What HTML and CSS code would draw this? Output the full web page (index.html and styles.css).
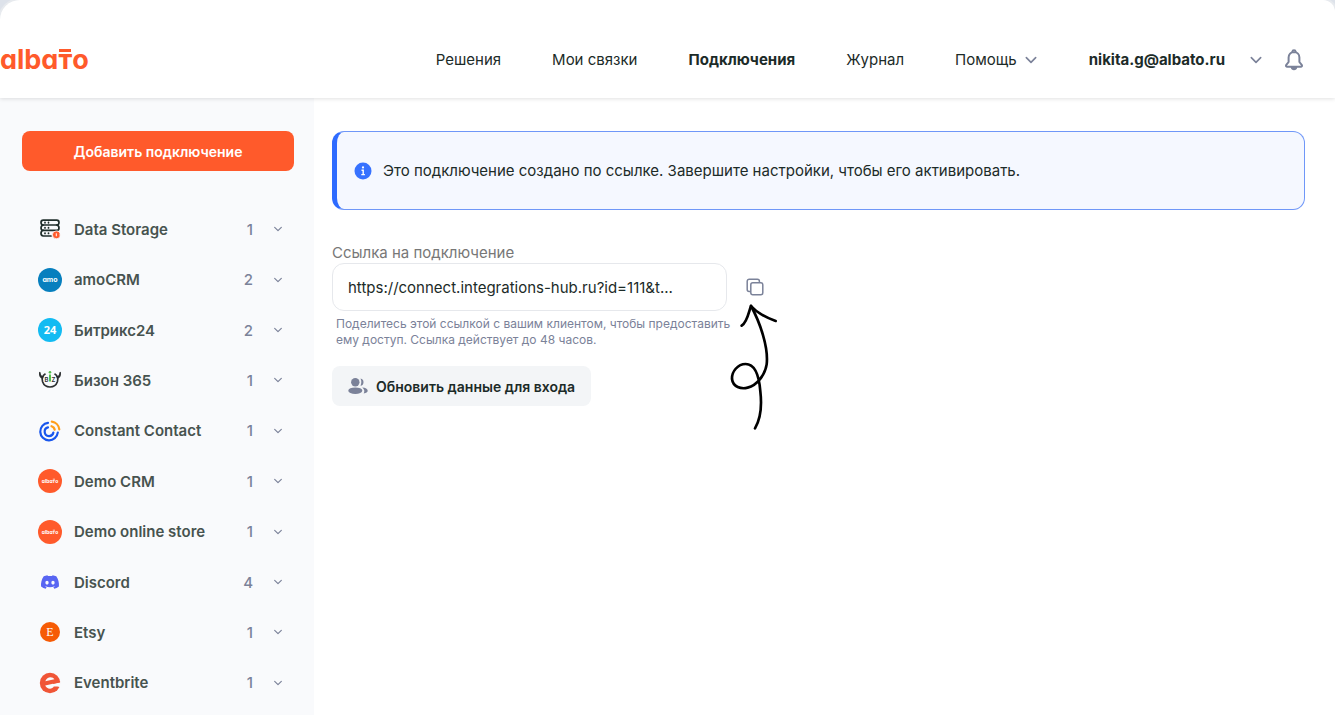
FILE: index.html
```html
<!DOCTYPE html>
<html lang="ru">
<head>
    <meta charset="UTF-8">
    <meta name="viewport" content="width=device-width, initial-scale=1.0">
    <title>Albato - Подключения</title>
    <link rel="stylesheet" href="styles.css">
</head>
<body>
    <!-- Shared icons -->
    <svg class="sprite" aria-hidden="true">
        <symbol id="chevron" viewBox="0 0 12 12">
            <path d="M2 4l4 4 4-4" fill="none" stroke="currentColor" stroke-width="1.4" stroke-linecap="round" stroke-linejoin="round"/>
        </symbol>
    </svg>

    <div class="app">
        <!-- Header -->
        <header class="header">
            <a href="#" class="logo">alba<span class="logo-t">т</span>o</a>
            <nav class="nav">
                <a href="#">Решения</a>
                <a href="#">Мои связки</a>
                <a href="#" class="active">Подключения</a>
                <a href="#">Журнал</a>
                <a href="#" class="nav-help">Помощь <svg class="chevron-lg"><use href="#chevron"/></svg></a>
            </nav>
            <button class="account">nikita.g@albato.ru <svg class="chevron-lg"><use href="#chevron"/></svg></button>
            <button class="bell" aria-label="Уведомления">
                <svg width="20" height="22" viewBox="0 0 20 22" fill="none" stroke="#7b8299" stroke-width="2" stroke-linejoin="round">
                    <path d="M8.5 3.2V2.6c0-.8.7-1.4 1.5-1.4s1.5.6 1.5 1.4v.6"/>
                    <path d="M10 3C6.700 3 4.600 5.500 4.600 8.500v4.500L2.100 16.200c-.4.6 0 1.500.7 1.500h14.400c.7 0 1.100-.9.7-1.500L15.400 13V8.500C15.400 5.500 13.300 3 10 3z"/>
                    <path d="M7.700 18.200c.3 1.300 1.200 2 2.300 2s2-.7 2.300-2z" fill="#7b8299"/>
                </svg>
            </button>
        </header>

        <div class="content">
            <!-- Sidebar -->
            <aside class="sidebar">
                <button class="add-button">Добавить подключение</button>
                <ul class="services">
                    <li>
                        <button class="service">
                            <svg class="service-icon" viewBox="0 0 24 24" fill="none" stroke="#1f2e2b" stroke-width="1.7" stroke-linecap="round">
                                <path d="M5.300 3.200h13.400q2.300 0 2.300 2.400t-2.300 2.400H5.300Q3 8 3 5.600t2.300-2.400z"/>
                                <path d="M5.300 8Q3 8.600 3 10.900t2.300 2.400h13.400q2.300 0 2.300-2.400T18.700 8"/>
                                <path d="M5.300 13.300Q3 13.900 3 16.300t2.300 2.700h7.700"/>
                                <path d="M7 5.400v.4M10.500 5.400v.4M7 10.600v.4M10.500 10.600v.4M7 16v.4M10.500 16v.4"/>
                                <circle cx="18.300" cy="17.800" r="3.900" fill="#ff5a2b" stroke="#f9fafc" stroke-width=".8"/>
                                <path d="M18.300 16.700v2.200" stroke="#fff" stroke-width="1"/>
                            </svg>
                            <span class="service-name">Data Storage</span>
                            <span class="service-count">1</span>
                            <svg class="chevron"><use href="#chevron"/></svg>
                        </button>
                    </li>
                    <li>
                        <button class="service">
                            <svg class="service-icon" viewBox="0 0 24 24">
                                <circle cx="12" cy="12" r="12" fill="#077fbe"/>
                                <text x="12" y="14" class="round-text round-text-amo">amo</text>
                            </svg>
                            <span class="service-name">amoCRM</span>
                            <span class="service-count">2</span>
                            <svg class="chevron"><use href="#chevron"/></svg>
                        </button>
                    </li>
                    <li>
                        <button class="service">
                            <svg class="service-icon" viewBox="0 0 24 24">
                                <circle cx="12" cy="12" r="12" fill="#13bbf2"/>
                                <text x="12" y="16" class="round-text round-text-24">24</text>
                            </svg>
                            <span class="service-name">Битрикс24</span>
                            <span class="service-count">2</span>
                            <svg class="chevron"><use href="#chevron"/></svg>
                        </button>
                    </li>
                    <li>
                        <button class="service">
                            <svg class="service-icon" viewBox="0 0 24 24">
                                <path d="M7.500 5.800C4.500 7.600 3.600 10.600 4.600 13.800c1.200 3.400 4.200 5.200 7.400 5.200s6.200-1.800 7.400-5.200c1-3.200.1-6.200-2.900-8" fill="none" stroke="#2c2f30" stroke-width="1.700"/>
                                <path d="M1.200 3.800c-.7 3.600.5 6.400 3.600 7l1-2.500C3.600 8.200 2.500 7.100 2.700 4.600zM22.800 3.800c.7 3.600-.5 6.400-3.600 7l-1-2.500c2.200-.1 3.300-1.200 3.100-3.700z" fill="#2c2f30"/>
                                <text x="8.500" y="14" class="biz-text">B</text>
                                <text x="15.500" y="14" class="biz-text">Z</text>
                                <path d="M12 6.500v7" stroke="#55c04d" stroke-width="2"/>
                                <circle cx="12" cy="4.200" r="1.300" fill="#55c04d"/>
                            </svg>
                            <span class="service-name">Бизон 365</span>
                            <span class="service-count">1</span>
                            <svg class="chevron"><use href="#chevron"/></svg>
                        </button>
                    </li>
                    <li>
                        <button class="service">
                            <svg class="service-icon" viewBox="0 0 24 24" fill="none" stroke="#1856ed" stroke-width="2.200" stroke-linecap="round">
                                <path d="M10 3.800A8.800 8.800 0 1 0 19.800 13.500"/>
                                <path d="M10 8.400A4.400 4.400 0 1 0 15.400 13.500"/>
                                <path d="M13.800 2.600a8.800 8.800 0 0 1 7.500 7.700M13.500 7.200a4.500 4.500 0 0 1 3.200 3.500" stroke="#ff9e1a"/>
                            </svg>
                            <span class="service-name">Constant Contact</span>
                            <span class="service-count">1</span>
                            <svg class="chevron"><use href="#chevron"/></svg>
                        </button>
                    </li>
                    <li>
                        <button class="service">
                            <svg class="service-icon" viewBox="0 0 24 24">
                                <circle cx="12" cy="12" r="12" fill="#ff5a2b"/>
                                <text x="12" y="14" class="round-text round-text-albato">albaтo</text>
                                <path d="M14.800 10.200h2.200" stroke="#fff" stroke-width=".7"/>
                            </svg>
                            <span class="service-name">Demo CRM</span>
                            <span class="service-count">1</span>
                            <svg class="chevron"><use href="#chevron"/></svg>
                        </button>
                    </li>
                    <li>
                        <button class="service">
                            <svg class="service-icon" viewBox="0 0 24 24">
                                <circle cx="12" cy="12" r="12" fill="#ff5a2b"/>
                                <text x="12" y="14" class="round-text round-text-albato">albaтo</text>
                                <path d="M14.800 10.200h2.200" stroke="#fff" stroke-width=".7"/>
                            </svg>
                            <span class="service-name">Demo online store</span>
                            <span class="service-count">1</span>
                            <svg class="chevron"><use href="#chevron"/></svg>
                        </button>
                    </li>
                    <li>
                        <button class="service">
                            <svg class="service-icon" viewBox="-4 -4 32 32">
                                <path fill="#5865f2" d="M20.317 4.3698a19.7913 19.7913 0 00-4.8851-1.5152.0741.0741 0 00-.0785.0371c-.211.3753-.4447.8648-.6083 1.2495-1.8447-.2762-3.68-.2762-5.4868 0-.1636-.3933-.4058-.8742-.6177-1.2495a.077.077 0 00-.0785-.037 19.7363 19.7363 0 00-4.8852 1.515.0699.0699 0 00-.0321.0277C.5334 9.0458-.319 13.5799.0992 18.0578a.0824.0824 0 00.0312.0561c2.0528 1.5076 4.0413 2.4228 5.9929 3.0294a.0777.0777 0 00.0842-.0276c.4616-.6304.8731-1.2952 1.226-1.9942a.076.076 0 00-.0416-.1057c-.6528-.2476-1.2743-.5495-1.8722-.8923a.077.077 0 01-.0076-.1277c.1258-.0943.2517-.1923.3718-.2914a.0743.0743 0 01.0776-.0105c3.9278 1.7933 8.18 1.7933 12.0614 0a.0739.0739 0 01.0785.0095c.1202.099.246.1981.3728.2924a.077.077 0 01-.0066.1276 12.2986 12.2986 0 01-1.873.8914.0766.0766 0 00-.0407.1067c.3604.698.7719 1.3628 1.225 1.9932a.076.076 0 00.0842.0286c1.961-.6067 3.9495-1.5219 6.0023-3.0294a.077.077 0 00.0313-.0552c.5004-5.177-.8382-9.6739-3.5485-13.6604a.061.061 0 00-.0312-.0286zM8.02 15.3312c-1.1825 0-2.1569-1.0857-2.1569-2.419 0-1.3332.9555-2.4189 2.157-2.4189 1.2108 0 2.1757 1.0952 2.1568 2.419 0 1.3332-.9555 2.4189-2.1569 2.4189zm7.9748 0c-1.1825 0-2.1569-1.0857-2.1569-2.419 0-1.3332.9554-2.4189 2.1569-2.4189 1.2108 0 2.1757 1.0952 2.1568 2.419 0 1.3332-.946 2.4189-2.1568 2.4189Z"/>
                            </svg>
                            <span class="service-name">Discord</span>
                            <span class="service-count">4</span>
                            <svg class="chevron"><use href="#chevron"/></svg>
                        </button>
                    </li>
                    <li>
                        <button class="service">
                            <svg class="service-icon" viewBox="0 0 24 24">
                                <circle cx="12" cy="12" r="10" fill="#f65b05"/>
                                <text x="12" y="16" class="round-text round-text-etsy">E</text>
                            </svg>
                            <span class="service-name">Etsy</span>
                            <span class="service-count">1</span>
                            <svg class="chevron"><use href="#chevron"/></svg>
                        </button>
                    </li>
                    <li>
                        <button class="service">
                            <svg class="service-icon" viewBox="0 0 24 24">
                                <circle cx="12" cy="12" r="10.200" fill="#f05537"/>
                                <path d="M7.300 10.200c1-2.500 3-3.900 5.200-3.900 1.800 0 3.200.7 3.900 2z" fill="#f9fafc"/>
                                <path d="M7.200 14.600l15.600-3.700v5.300l-3.400-.6h-3.600c-.9 1.300-2.200 2.100-3.800 2.100-2.200 0-4-1.100-4.800-3.100z" fill="#f9fafc"/>
                                <path d="M15.500 9l6.600 1.200-.1 1.300-7 1.600z" fill="#f05537"/>
                            </svg>
                            <span class="service-name">Eventbrite</span>
                            <span class="service-count">1</span>
                            <svg class="chevron"><use href="#chevron"/></svg>
                        </button>
                    </li>
                </ul>
            </aside>

            <!-- Connection settings -->
            <main class="main">
                <div class="notice">
                    <svg width="18" height="18" viewBox="0 0 18 18">
                        <circle cx="9" cy="9" r="8.500" fill="#3772ff"/>
                        <circle cx="9" cy="5.400" r="1.100" fill="#fff"/>
                        <path d="M7.500 8.200h1.700v4.200M7.300 12.600h3.600" fill="none" stroke="#fff" stroke-width="1.400"/>
                    </svg>
                    <p>Это подключение создано по ссылке. Завершите настройки, чтобы его активировать.</p>
                </div>

                <label class="link-label" for="link">Ссылка на подключение</label>
                <div class="link-row">
                    <input type="text" id="link" class="link-input" value="https://connect.integrations-hub.ru?id=111&amp;t..." readonly>
                    <div class="copy">
                        <button class="copy-button" aria-label="Скопировать">
                            <svg width="18" height="18" viewBox="0 0 18 18" fill="none" stroke="#7b8299" stroke-width="1.500">
                                <path d="M4.800 13.400H3.200a2 2 0 0 1-2-2V3.200a2 2 0 0 1 2-2h8.200a2 2 0 0 1 2 2v1.400"/>
                                <rect x="4.800" y="4.800" width="12" height="12" rx="2"/>
                            </svg>
                        </button>
                        <svg class="arrow" width="50" height="128" viewBox="28 130 150 384" fill="none" stroke="#000" stroke-width="8" stroke-linecap="round" stroke-linejoin="round">
                            <path d="M106 506C124 476 126 430 122 395C118 345 104 313 78 313C54 313 36 336 37 358C40 382 64 389 84 384C112 377 136 346 141 314C147 262 120 186 94 139"/>
                            <path d="M66 198C84 186 88 152 94 139C112 160 140 174 168 184"/>
                        </svg>
                    </div>
                </div>
                <p class="link-hint">Поделитесь этой ссылкой с вашим клиентом, чтобы предоставить ему доступ. Ссылка действует до 48 часов.</p>

                <button class="update-button">
                    <svg width="20" height="18" viewBox="0 0 20 18" fill="#7b8299">
                        <circle cx="7.300" cy="5.200" r="4.200"/>
                        <ellipse cx="7.300" cy="13.700" rx="7" ry="3.300"/>
                        <path d="M12.500 1.600a3.600 3.600 0 0 1 0 7.100c1.100-2.200 1.100-4.900 0-7.100zM14.200 10.600c3.300.1 5.500 1.400 5.500 3.100 0 1.300-1.500 2.300-4 2.700 1-1.500 1-4-1.500-5.800z"/>
                    </svg>
                    Обновить данные для входа
                </button>
            </main>
        </div>
    </div>
</body>
</html>
```
FILE: styles.css
```css
/* Base Styles */
* {
    margin: 0;
    padding: 0;
    box-sizing: border-box;
}

body {
    background: #dde2ea;
    font-family: Inter, 'Liberation Sans', sans-serif;
    font-size: 15px;
    color: #1c2b28;
}

button {
    border: none;
    background: none;
    font: inherit;
    color: inherit;
    cursor: pointer;
}

a {
    color: inherit;
    text-decoration: none;
}

.sprite {
    position: absolute;
    width: 0;
    height: 0;
}

/* App Container */
.app {
    min-height: 100vh;
    display: flex;
    flex-direction: column;
    background: #fff;
    border-radius: 20px 12px 0 0;
    box-shadow: 0 0 0 2px #e7eaee;
    overflow: hidden;
}

/* Header */
.header {
    display: flex;
    align-items: center;
    min-height: 98px;
    padding: 21px 31px 0 0;
    box-shadow: 0 1px 4px rgba(0, 0, 0, 0.12);
    z-index: 1;
}

.logo {
    font-size: 27px;
    font-weight: 700;
    color: #ff5a2b;
    font-feature-settings: "cv11";
}

.logo-t {
    position: relative;
}

.logo-t::before {
    content: "";
    position: absolute;
    top: 6px;
    left: 1px;
    right: 1px;
    height: 3px;
    background: #ff5a2b;
}

.nav {
    display: flex;
    gap: 51px;
    margin-left: auto;
}

.nav .active {
    font-weight: 700;
}

.nav-help {
    display: flex;
    align-items: center;
    gap: 7px;
}

.account {
    display: flex;
    align-items: center;
    gap: 24px;
    margin-left: 51px;
    font-weight: 700;
}

.chevron-lg {
    width: 14px;
    height: 14px;
    color: #7b8299;
}

.bell {
    display: flex;
    margin-left: 21px;
}

.content {
    flex: 1;
    display: flex;
}

/* Sidebar */
.sidebar {
    width: 314px;
    flex-shrink: 0;
    display: flex;
    flex-direction: column;
    padding: 33px 20px 7px 22px;
    background: #f9fafc;
}

.add-button {
    height: 40px;
    flex-shrink: 0;
    border-radius: 8px;
    background: #ff5a2b;
    color: #fff;
    font-size: 14px;
    font-weight: 600;
}

.services {
    flex: 1;
    display: flex;
    flex-direction: column;
    margin-top: 33px;
    list-style: none;
}

.services li {
    flex: 1;
    display: flex;
}

.service {
    flex: 1;
    display: flex;
    align-items: center;
    padding: 10px 11px 10px 16px;
    text-align: left;
}

.service-icon {
    width: 24px;
    height: 24px;
}

.service-name {
    flex: 1;
    margin-left: 12px;
    font-weight: 600;
    color: #47534f;
}

.service-count {
    font-weight: 500;
    color: #7b8299;
}

.chevron {
    width: 10px;
    height: 10px;
    margin-left: 20px;
    color: #7b8299;
}

/* Texts inside the service icons */
.round-text {
    fill: #fff;
    font-weight: 700;
    text-anchor: middle;
}

.round-text-albato {
    font-size: 5px;
    font-feature-settings: "cv11";
}

.round-text-amo {
    font-size: 7px;
    font-feature-settings: "cv11";
}

.round-text-24 {
    font-family: 'Open Sans', sans-serif;
    font-size: 11px;
}

.round-text-etsy {
    font-family: 'Liberation Serif', serif;
    font-size: 12px;
    font-weight: 400;
}

.biz-text {
    fill: #2c2f30;
    font-size: 6px;
    font-weight: 600;
    text-anchor: middle;
}

/* Main */
.main {
    flex: 1;
    padding: 33px 30px 30px 18px;
}

.notice {
    display: flex;
    align-items: center;
    gap: 11px;
    min-height: 79px;
    padding: 16px 17px;
    border: 1px solid #6f97f8;
    border-left: 5px solid #2e6bff;
    border-radius: 12px;
    background: #f5f8ff;
}

.link-label {
    display: block;
    margin-top: 33px;
    line-height: 20px;
    color: #777;
}

.link-row {
    display: flex;
    align-items: center;
    gap: 16px;
}

.link-input {
    width: 395px;
    height: 48px;
    padding: 0 15px;
    border: 1px solid #e6e8ec;
    border-radius: 12px;
    background: #fff;
    font: inherit;
    color: inherit;
}

.copy {
    position: relative;
}

.copy-button {
    display: flex;
    align-items: center;
    justify-content: center;
    width: 24px;
    height: 24px;
}

/* Hand-drawn arrow pointing at the copy button */
.arrow {
    position: absolute;
    top: 28px;
    left: -14px;
}

.link-hint {
    max-width: 400px;
    margin-top: 5px;
    padding-left: 4px;
    font-size: 12px;
    line-height: 16px;
    color: #7b8299;
}

.update-button {
    display: flex;
    align-items: center;
    gap: 8px;
    height: 40px;
    margin-top: 18px;
    padding: 0 16px;
    border-radius: 8px;
    background: #f3f5f7;
    font-size: 14px;
    font-weight: 600;
}
```
